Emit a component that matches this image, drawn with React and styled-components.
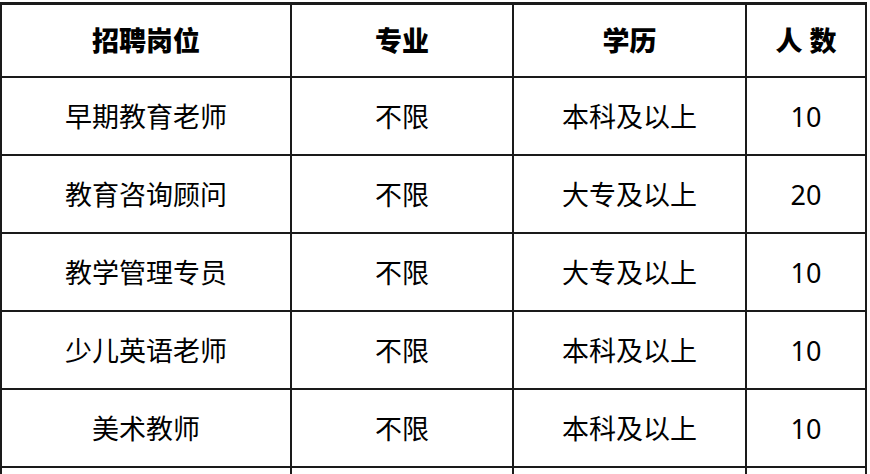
import styled, { createGlobalStyle } from "styled-components";

const GlobalStyle = createGlobalStyle`
  html, body {
    margin: 0;
    padding: 0;
    background: #fff;
  }
  body {
    height: 474px;
    overflow: hidden;
    font-family: "Noto Sans", "Noto Sans CJK SC", sans-serif;
    color: #000;
  }
`;

const columns = ["招聘岗位", "专业", "学历", "人 数"];

const rows = [
  ["早期教育老师", "不限", "本科及以上", "10"],
  ["教育咨询顾问", "不限", "大专及以上", "20"],
  ["教学管理专员", "不限", "大专及以上", "10"],
  ["少儿英语老师", "不限", "本科及以上", "10"],
  ["美术教师", "不限", "本科及以上", "10"],
  ["", "", "", ""],
];

const Table = styled.div`
  display: grid;
  grid-template-columns: 290px 222px 233px 120px;
  width: 865px;
  margin-top: 2px;
  border-top: 3px solid #1a1a1a;
  border-left: 2px solid #1a1a1a;
`;

const Cell = styled.div`
  display: flex;
  align-items: center;
  justify-content: center;
  box-sizing: border-box;
  height: ${(p) => (p.$head ? "73px" : "78px")};
  border-right: 2px solid #1a1a1a;
  border-bottom: 2px solid #1a1a1a;
  font-size: 27px;
  font-weight: ${(p) => (p.$head ? 900 : 400)};
  line-height: 1;
  white-space: pre;
`;

export default function App() {
  return (
    <>
      <GlobalStyle />
      <Table>
        {columns.map((c) => (
          <Cell key={c} $head>
            {c}
          </Cell>
        ))}
        {rows.map((r, i) =>
          r.map((v, j) => <Cell key={`${i}-${j}`}>{v}</Cell>)
        )}
      </Table>
    </>
  );
}
